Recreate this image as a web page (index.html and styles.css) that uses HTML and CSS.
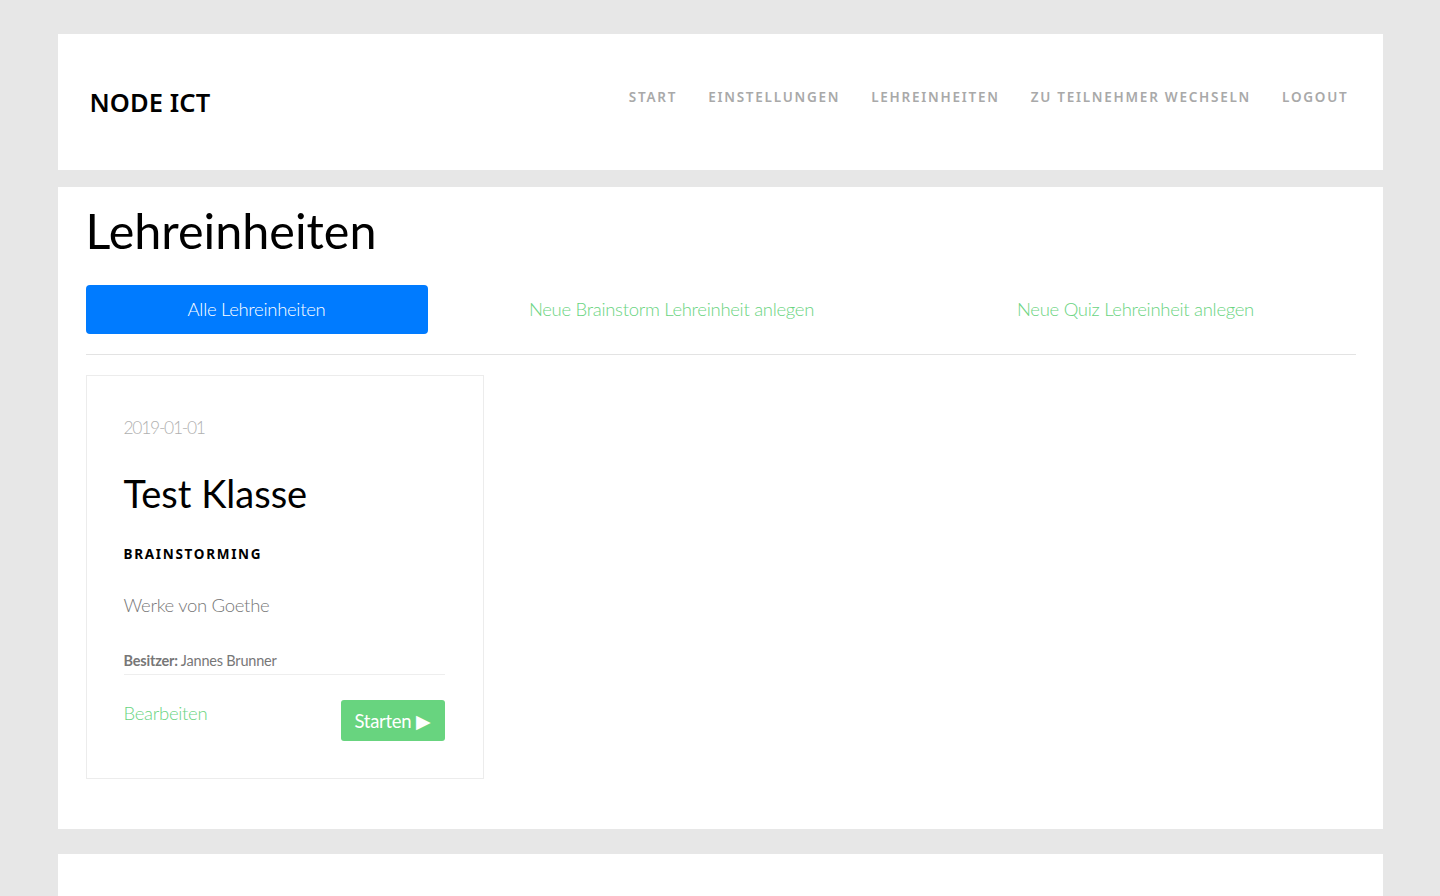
FILE: index.html
```html
<!DOCTYPE html>
<html lang="de">
<head>
<meta charset="utf-8">
<title>Lehreinheiten – NODE ICT</title>
<link rel="stylesheet" href="styles.css">
</head>
<body>
<div class="page">
  <header class="panel header">
    <div class="logo">NODE ICT</div>
    <nav class="nav">
      <a href="#">Start</a>
      <a href="#">Einstellungen</a>
      <a href="#">Lehreinheiten</a>
      <a href="#">Zu Teilnehmer wechseln</a>
      <a href="#">Logout</a>
    </nav>
  </header>

  <main class="panel main">
    <h1 class="title">Lehreinheiten</h1>
    <div class="tabs">
      <a href="#" class="tab tab-active">Alle Lehreinheiten</a>
      <a href="#" class="tab tab-link">Neue Brainstorm Lehreinheit anlegen</a>
      <a href="#" class="tab tab-link">Neue Quiz Lehreinheit anlegen</a>
    </div>
    <div class="cards">
      <article class="card">
        <div class="date">2019-01-01</div>
        <h2 class="card-title">Test Klasse</h2>
        <div class="type">Brainstorming</div>
        <p class="desc">Werke von Goethe</p>
        <div class="owner"><b>Besitzer:</b> Jannes Brunner</div>
        <div class="actions">
          <a href="#" class="edit">Bearbeiten</a>
          <a href="#" class="start">Starten ▶</a>
        </div>
      </article>
    </div>
  </main>

  <section class="panel footer-panel"></section>
</div>
</body>
</html>
```

FILE: styles.css
```css
html, body {
  margin: 0;
  padding: 0;
}
body {
  background: #e7e7e7;
  font-family: "Lato", "Open Sans", sans-serif;
  color: #000;
  height: 896px;
  overflow: hidden;
}
a { text-decoration: none; }

.page {
  width: 1325px;
  margin: 0 auto;
  padding-top: 34px;
  display: flex;
  flex-direction: column;
}
.panel {
  background: #fff;
}

/* Header */
.header {
  height: 136px;
  box-sizing: border-box;
  display: flex;
  align-items: center;
  justify-content: space-between;
  padding: 0 34px 0 32px;
}
.logo {
  font-family: "Noto Sans", sans-serif;
  font-weight: 600;
  font-size: 25.5px;
  letter-spacing: 0.1px;
  color: #000;
  margin-top: -1px;
}
.nav {
  display: flex;
  gap: 31px;
  margin-top: -10px;
}
.nav a {
  font-family: "Noto Sans", sans-serif;
  font-weight: 600;
  font-size: 13.5px;
  letter-spacing: 1.75px;
  text-transform: uppercase;
  color: #a9a9a9;
}

/* Main */
.main {
  margin-top: 17px;
  padding: 14px 27px 50px 28px;
}
.title {
  font-family: "Lato", sans-serif;
  font-weight: 400;
  font-size: 48.5px;
  line-height: 60px;
  margin: -1px 0 25px;
  letter-spacing: 0;
}
.tabs {
  display: grid;
  grid-template-columns: 342px 1fr 1fr;
  column-gap: 24px;
  align-items: center;
  padding-bottom: 20px;
  border-bottom: 1px solid #e3e3e3;
}
.tab {
  display: flex;
  align-items: center;
  justify-content: center;
  height: 49px;
  font-family: "Lato", sans-serif;
  font-weight: 300;
  font-size: 18.5px;
  letter-spacing: -0.3px;
  padding-bottom: 1px;
  box-sizing: border-box;
}
.tab-active {
  background: #007bff;
  color: #fff;
  border-radius: 4px;
}
.tab-link {
  color: #6ad47f;
}

.cards {
  padding-top: 20px;
  display: flex;
}
.card {
  width: 398px;
  box-sizing: border-box;
  border: 1px solid #ececec;
  padding: 41px 38px 37px 37px;
}
.date {
  font-weight: 300;
  font-size: 17.5px;
  color: #b0b0b0;
  letter-spacing: -1.3px;
}
.card-title {
  font-family: "Lato", sans-serif;
  font-weight: 400;
  font-size: 38px;
  line-height: 48px;
  margin: 31px 0 0;
}
.type {
  margin-top: 28px;
  font-family: "Noto Sans", sans-serif;
  font-weight: 700;
  font-size: 13.5px;
  letter-spacing: 1.7px;
  text-transform: uppercase;
}
.desc {
  margin: 31px 0 0;
  font-weight: 300;
  font-size: 18.5px;
  color: #777;
  letter-spacing: -0.3px;
}
.owner {
  margin-top: 36px;
  font-size: 14.5px;
  font-weight: 400;
  color: #777;
  padding-bottom: 5px;
  border-bottom: 1px solid #eee;
  letter-spacing: -0.2px;
}
.owner b {
  font-weight: 700;
}
.actions {
  display: flex;
  justify-content: space-between;
  align-items: flex-start;
  margin-top: 25px;
}
.edit {
  color: #6ad47f;
  font-weight: 300;
  font-size: 18.5px;
  letter-spacing: -0.3px;
  margin-top: 2px;
}
.start {
  background: #68d47f;
  color: #fff;
  font-size: 18.5px;
  font-weight: 400;
  width: 104px;
  height: 41px;
  border-radius: 3px;
  display: flex;
  align-items: center;
  justify-content: center;
  letter-spacing: -0.3px;
}

.footer-panel {
  margin-top: 25px;
  height: 60px;
}
```
